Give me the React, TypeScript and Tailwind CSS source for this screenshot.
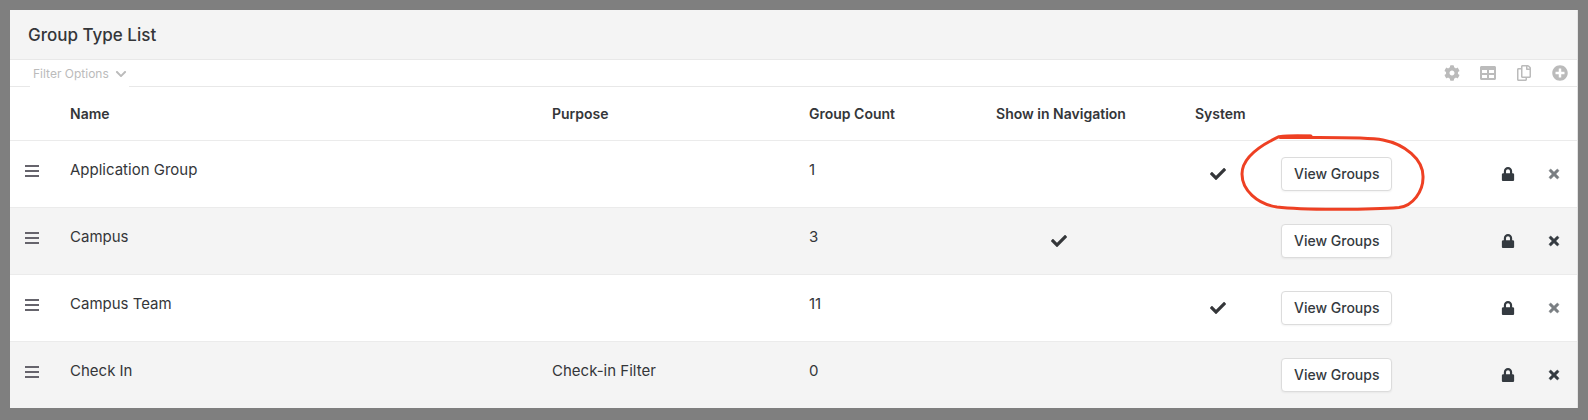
import React from "react";
import { FaCog, FaTable, FaRegCopy, FaPlusCircle, FaLock, FaTimes, FaCheck, FaChevronDown } from "react-icons/fa";

type GroupType = {
  name: string;
  purpose?: string;
  count: number;
  inNavigation?: boolean;
  system?: boolean;
  highlighted?: boolean;
};

const groupTypes: GroupType[] = [
  { name: "Application Group", count: 1, system: true, highlighted: true },
  { name: "Campus", count: 3, inNavigation: true },
  { name: "Campus Team", count: 11, system: true },
  { name: "Check In", purpose: "Check-in Filter", count: 0 },
];

const actions = [
  { label: "Settings", Icon: FaCog },
  { label: "Export to Excel", Icon: FaTable },
  { label: "Copy", Icon: FaRegCopy },
  { label: "Add", Icon: FaPlusCircle },
];

function DragHandle() {
  return (
    <svg width="14" height="12" viewBox="0 0 14 12" fill="#66646c" aria-hidden="true">
      <rect width="14" height="2" y="0" />
      <rect width="14" height="2" y="5" />
      <rect width="14" height="2" y="10" />
    </svg>
  );
}

function MarkerCircle() {
  return (
    <svg
      className="pointer-events-none absolute -top-6 -left-[42px] z-10"
      width="188"
      height="80"
      viewBox="0 0 188 80"
      fill="none"
      stroke="#ee4023"
      strokeWidth="3"
      strokeLinecap="round"
      strokeLinejoin="round"
      aria-hidden="true"
    >
      <path d="M72 3 C60 2.500 48 2.600 40 3.700 C20 13 3 25 3 41 C3 57 18 71 38 74 C62 77 130 77 160 74.500 C174 73 184 58 184 45 C185 26 165 11 144 7 C124 3.500 82 5 41 4.500" />
      <path d="M42 4.200 C52 3.600 62 3.600 71 3.300" />
    </svg>
  );
}

function GroupTypeRow({ item }: { item: GroupType }) {
  return (
    <tr className="h-[67px] border-b border-[#ebebeb] align-top even:bg-[#f4f4f4] last:border-b-0">
      <td className="pt-6 pl-[15px]">
        <button type="button" aria-label={`Reorder ${item.name}`} className="block">
          <DragHandle />
        </button>
      </td>
      <td className="px-3 pt-[17px] text-[15px] leading-6">{item.name}</td>
      <td className="px-3 pt-[17px] text-[15px] leading-6">{item.purpose}</td>
      <td className="px-3 pt-[17px] text-[15px] leading-6">{item.count}</td>
      <td className="pr-1 align-middle">
        {item.inNavigation && <FaCheck className="mx-auto size-4" aria-label="Yes" />}
      </td>
      <td className="pr-1 align-middle">
        {item.system && <FaCheck className="mx-auto size-4" aria-label="Yes" />}
      </td>
      <td className="pl-6 align-middle">
        <div className="relative w-fit">
          <button
            type="button"
            className="block rounded border border-[#dcdcdc] bg-white px-3 py-1.5 text-sm leading-5 font-medium whitespace-nowrap text-[#343a40] shadow-xs"
          >
            View Groups
          </button>
          {item.highlighted && <MarkerCircle />}
        </div>
      </td>
      <td className="align-middle text-[#343a40]">
        <button type="button" aria-label={`Security for ${item.name}`} className="mx-auto block">
          <FaLock className="size-3.5" />
        </button>
      </td>
      <td className="align-middle text-[#343a40]">
        <button
          type="button"
          disabled={item.system}
          aria-label={`Delete ${item.name}`}
          className="mx-auto block disabled:opacity-65"
        >
          <FaTimes className="size-3.5 stroke-current stroke-[20px]" />
        </button>
      </td>
    </tr>
  );
}

export default function App() {
  return (
    <div className="min-h-screen bg-[#7f7f7f] px-2.5 pt-2.5 pb-[11px] font-['Inter',sans-serif] text-[#343639]">
      <section className="border-r border-[#e4e4e4] bg-white">
        <header className="border-b border-[#e8e8e8] bg-[#f4f4f4] px-[18px] pt-3 pb-2.5">
          <h1 className="text-[17px] leading-[27px] font-medium">Group Type List</h1>
        </header>
        <div className="flex h-[27px] items-stretch justify-between border-b border-[#e8e8e8] pr-[9px] pl-5 text-[#bbbbbb]">
          <button type="button" className="-mb-px flex items-center gap-1.5 bg-white pr-0.5 pl-[3px] text-xs">
            Filter Options
            <FaChevronDown className="size-3" />
          </button>
          <div className="flex items-center gap-5">
            {actions.map(({ label, Icon }) => (
              <button key={label} type="button" aria-label={label}>
                <Icon className="block size-4" />
              </button>
            ))}
          </div>
        </div>
        <table className="w-full table-fixed border-collapse text-left">
          <colgroup>
            <col className="w-12" />
            <col />
            <col className="w-[257px]" />
            <col className="w-[142px]" />
            <col className="w-[244px]" />
            <col className="w-[74px]" />
            <col className="w-[228px]" />
            <col className="w-[46px]" />
            <col className="w-[46px]" />
          </colgroup>
          <thead>
            <tr className="h-[53px] border-b border-[#ebebeb] text-sm [&>th]:px-3 [&>th]:pt-0.5 [&>th]:font-semibold">
              <td />
              <th scope="col">Name</th>
              <th scope="col">Purpose</th>
              <th scope="col">Group Count</th>
              <th scope="col" className="text-center">Show in Navigation</th>
              <th scope="col" className="text-center">System</th>
              <td />
              <td />
              <td />
            </tr>
          </thead>
          <tbody>
            {groupTypes.map((item) => (
              <GroupTypeRow key={item.name} item={item} />
            ))}
          </tbody>
        </table>
      </section>
    </div>
  );
}
